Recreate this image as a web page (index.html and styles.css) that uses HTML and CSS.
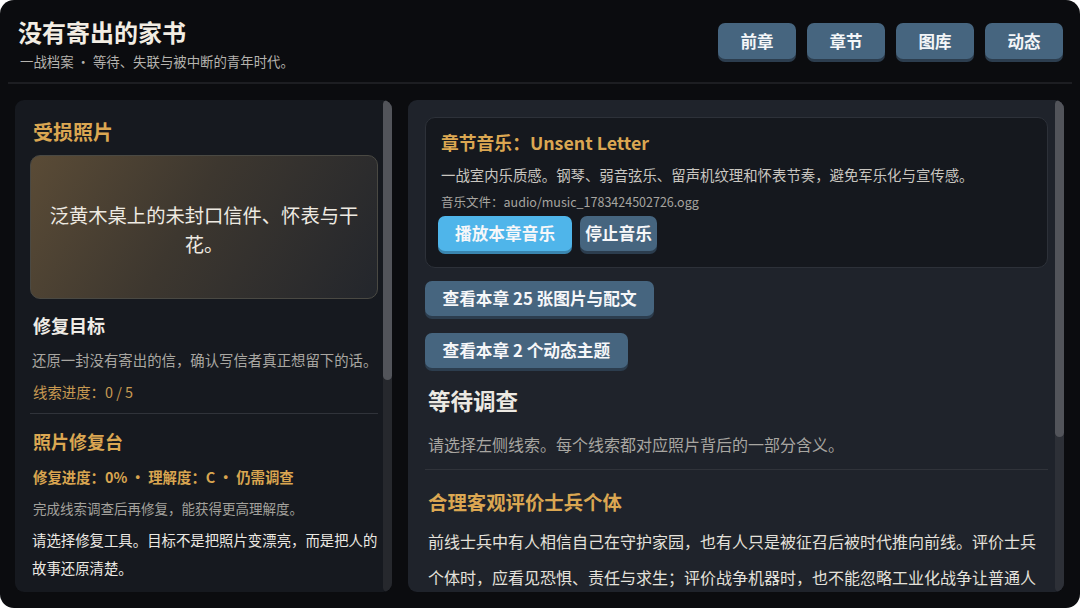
FILE: index.html
```html
<!DOCTYPE html>
<html lang="zh-CN">
<head>
<meta charset="utf-8">
<title>没有寄出的家书</title>
<link rel="stylesheet" href="styles.css">
</head>
<body>
<div class="app">
  <header class="header">
    <div class="header-bar">
      <div class="brand">
        <h1 class="title">没有寄出的家书</h1>
        <p class="subtitle">一战档案 · 等待、失联与被中断的青年时代。</p>
      </div>
      <nav class="nav">
        <button class="nav-btn">前章</button>
        <button class="nav-btn">章节</button>
        <button class="nav-btn">图库</button>
        <button class="nav-btn">动态</button>
      </nav>
    </div>
  </header>
  <main class="main">
    <section class="panel panel-left">
      <div class="panel-body panel-body-left">
        <h2 class="sec-title gold">受损照片</h2>
        <div class="photo">泛黄木桌上的未封口信件、怀表与干花。</div>
        <h3 class="goal-title">修复目标</h3>
        <p class="goal-desc">还原一封没有寄出的信，确认写信者真正想留下的话。</p>
        <p class="goal-progress">线索进度：0 / 5</p>
        <hr class="divider divider-left">
        <h2 class="desk-title gold">照片修复台</h2>
        <p class="desk-status">修复进度：0% · 理解度：C · 仍需调查</p>
        <p class="desk-hint">完成线索调查后再修复，能获得更高理解度。</p>
        <p class="desk-text">请选择修复工具。目标不是把照片变漂亮，而是把人的故事还原清楚。</p>
      </div>
      <div class="scrollbar scrollbar-left"><div class="thumb thumb-left"></div></div>
    </section>
    <section class="panel panel-right">
      <div class="panel-body panel-body-right">
        <div class="music-card">
          <h3 class="music-title">章节音乐：Unsent Letter</h3>
          <p class="music-desc">一战室内乐质感。钢琴、弱音弦乐、留声机纹理和怀表节奏，避免军乐化与宣传感。</p>
          <p class="music-file">音乐文件：audio/music_1783424502726.ogg</p>
          <div class="music-actions">
            <button class="btn btn-play">播放本章音乐</button>
            <button class="btn btn-stop">停止音乐</button>
          </div>
        </div>
        <button class="btn btn-view btn-gallery">查看本章 25 张图片与配文</button>
        <button class="btn btn-view btn-themes">查看本章 2 个动态主题</button>
        <h2 class="wait-title">等待调查</h2>
        <p class="wait-text">请选择左侧线索。每个线索都对应照片背后的一部分含义。</p>
        <hr class="divider divider-right">
        <h2 class="eval-title gold">合理客观评价士兵个体</h2>
        <p class="eval-text">前线士兵中有人相信自己在守护家园，也有人只是被征召后被时代推向前线。评价士兵个体时，应看见恐惧、责任与求生；评价战争机器时，也不能忽略工业化战争让普通人</p>
      </div>
      <div class="scrollbar scrollbar-right"><div class="thumb thumb-right"></div></div>
    </section>
  </main>
</div>
</body>
</html>
```

FILE: styles.css
```css
* { box-sizing: border-box; }
html { background: #ffffff; }
body {
  margin: 0;
  font-family: "Noto Sans CJK SC", "Noto Sans", sans-serif;
  color: #e9e6df;
}
.app {
  width: 1080px;
  height: 608px;
  background: #0b0c0f;
  border-radius: 14px;
  overflow: hidden;
}
h1, h2, h3, p { margin: 0; }
button { font-family: inherit; border: 0; cursor: pointer; }

.header { padding: 0 8px; }
.header-bar {
  height: 84px;
  border-bottom: 2px solid #1d1e22;
  padding: 16px 9px 0 10px;
  display: flex;
  justify-content: space-between;
  align-items: flex-start;
}
.title {
  font-size: 24px;
  line-height: 31px;
  font-weight: 700;
  color: #f2ede3;
}
.subtitle {
  margin-top: 5px;
  margin-left: 2px;
  font-size: 13.4px;
  line-height: 19px;
  color: #b5b3ae;
}
.nav {
  display: flex;
  gap: 11px;
  margin-top: 7px;
}
.nav-btn {
  width: 78px;
  height: 36px;
  border-radius: 7px;
  background: #46657f;
  box-shadow: 0 3px 0 #2c3d4e;
  color: #f4f6f8;
  font-size: 16.5px;
  font-weight: 700;
}

.main {
  display: grid;
  grid-template-columns: 377px 656px;
  gap: 16px;
  padding: 16px 16px 0 15px;
}
.panel {
  position: relative;
  height: 492px;
  border-radius: 9px;
  overflow: hidden;
}
.panel-left { background: #16191f; }
.panel-right { background: #1f232b; }
.panel-body-left { padding: 18px 13px 0 15px; }
.panel-body-right { padding: 17px 16px 0 17px; }

.scrollbar {
  position: absolute;
  top: 0;
  right: 0;
  bottom: 0;
  width: 9px;
  border-radius: 5px;
}
.scrollbar-left { background: #26282d; }
.scrollbar-right { background: #2d3037; }
.thumb {
  width: 100%;
  background: #52545a;
  border-radius: 5px;
}
.thumb-left { height: 280px; }
.thumb-right { height: 337px; }

.gold { color: #dba752; }

.sec-title {
  padding: 0 3px;
  font-size: 20px;
  line-height: 28px;
  font-weight: 700;
}
.photo {
  margin: 9px 1px 0 0;
  height: 144px;
  border: 1px solid #4a4943;
  border-radius: 10px;
  background: linear-gradient(120deg, #5a4b36 0%, #3d372f 45%, #23262c 100%);
  display: flex;
  align-items: center;
  justify-content: center;
  text-align: center;
  padding: 6px 16px 0;
  font-size: 19.3px;
  line-height: 29px;
  color: #eeeae2;
}
.goal-title {
  margin-top: 14px;
  padding: 0 3px;
  font-size: 18px;
  line-height: 25px;
  font-weight: 700;
  color: #efece6;
}
.goal-desc {
  margin-top: 11px;
  padding: 0 0 0 2px;
  font-size: 14.4px;
  line-height: 22px;
  color: #a9a7a2;
}
.goal-progress {
  margin-top: 10px;
  padding: 0 3px;
  font-size: 14.4px;
  line-height: 22px;
  color: #c89a52;
}
.divider {
  margin: 10px 0 0;
  border: 0;
  height: 1px;
  background: #30333a;
}
.divider-left { margin-right: 1px; }
.desk-title {
  margin-top: 15px;
  padding: 0 3px;
  font-size: 18px;
  line-height: 25px;
  font-weight: 700;
}
.desk-status {
  margin-top: 12px;
  padding: 0 3px;
  font-size: 14.4px;
  line-height: 22px;
  font-weight: 700;
  color: #d9a550;
}
.desk-hint {
  margin-top: 10px;
  padding: 0 3px;
  font-size: 13.5px;
  line-height: 21px;
  color: #a3a19c;
}
.desk-text {
  margin-top: 7px;
  padding: 0 0 0 2px;
  font-size: 14.4px;
  line-height: 28px;
  color: #ebe8e2;
}

.music-card {
  background: #15181e;
  border: 1px solid #2d3139;
  border-radius: 10px;
  padding: 12px 12px 16px 12px;
}
.music-title {
  padding-left: 3px;
  font-size: 17.8px;
  line-height: 25px;
  font-weight: 700;
  color: #dba752;
}
.music-desc {
  margin-top: 8px;
  padding-left: 3px;
  font-size: 14.4px;
  line-height: 23px;
  color: #c9c6c0;
}
.music-file {
  margin-top: 5px;
  padding-left: 3px;
  font-size: 12.5px;
  line-height: 21px;
  color: #a7a5a0;
}
.music-actions {
  margin-top: 4px;
  display: flex;
  gap: 8px;
}
.btn {
  height: 35px;
  border-radius: 7px;
  color: #f6f7f9;
  font-size: 16.7px;
  font-weight: 700;
  line-height: 35px;
}
.btn-play {
  background: #4fb5ea;
  box-shadow: 0 3px 0 #3a86b0;
  padding: 0 17px;
}
.btn-stop {
  background: #46657f;
  box-shadow: 0 3px 0 #2c3d4e;
  padding: 0 5px;
}
.btn-view {
  display: block;
  background: #46657f;
  box-shadow: 0 3px 0 #2c3d4e;
  padding: 0 17.5px;
}
.btn-gallery { margin-top: 13px; }
.btn-themes { margin-top: 17px; }
.wait-title {
  margin-top: 17px;
  padding: 0 3px;
  font-size: 22.5px;
  line-height: 31px;
  font-weight: 700;
  color: #ece9e3;
}
.wait-text {
  margin-top: 16px;
  padding: 0 3px;
  font-size: 16px;
  line-height: 25px;
  color: #a8a6a1;
}
.divider-right {
  margin-top: 12px;
}
.eval-title {
  margin-top: 18px;
  padding: 0 3px;
  font-size: 19.4px;
  line-height: 27px;
  font-weight: 700;
}
.eval-text {
  margin-top: 8px;
  padding: 0 0 0 3px;
  font-size: 16px;
  line-height: 36.3px;
  color: #e4e1db;
}
```
